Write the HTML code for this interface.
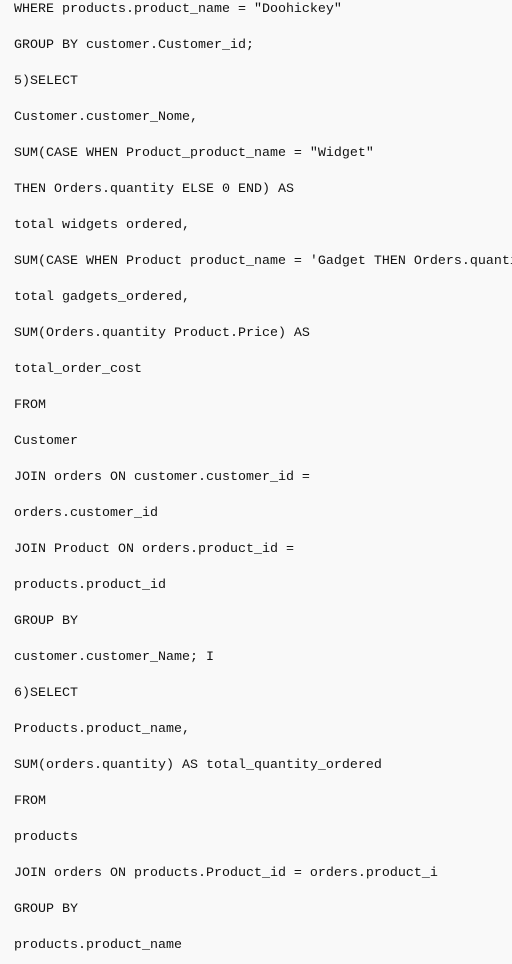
<!DOCTYPE html>
<html><head><meta charset="utf-8"><style>
html,body{margin:0;padding:0;background:#f9f9f9;width:512px;height:963px;overflow:hidden}
.c{position:absolute;left:14px;top:-8px;font-family:"Liberation Mono",monospace;font-size:13.33px;line-height:36px;color:#111;white-space:pre}
</style></head><body><div class="c">WHERE products.product_name = "Doohickey"
GROUP BY customer.Customer_id;
5)SELECT
Customer.customer_Nome,
SUM(CASE WHEN Product_product_name = "Widget"
THEN Orders.quantity ELSE 0 END) AS
total widgets ordered,
SUM(CASE WHEN Product product_name = 'Gadget THEN Orders.quantity
total gadgets_ordered,
SUM(Orders.quantity Product.Price) AS
total_order_cost
FROM
Customer
JOIN orders ON customer.customer_id =
orders.customer_id
JOIN Product ON orders.product_id =
products.product_id
GROUP BY
customer.customer_Name; I
6)SELECT
Products.product_name,
SUM(orders.quantity) AS total_quantity_ordered
FROM
products
JOIN orders ON products.Product_id = orders.product_i
GROUP BY
products.product_name</div></body></html>
